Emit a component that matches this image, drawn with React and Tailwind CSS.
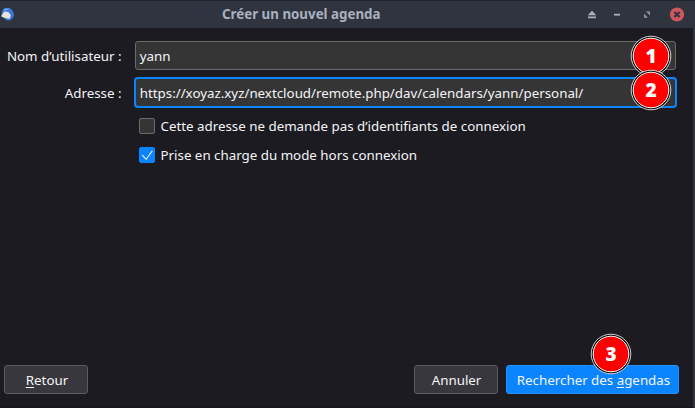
function Badge({ n, className }) {
  return (
    <span className={`absolute z-10 block size-[42px] ${className}`}>
      <svg viewBox="0 0 42 42" className="absolute inset-0 size-full">
        <circle cx="21" cy="21" r="19.8" fill="#0a0a0a" stroke="#d0d0d0" strokeWidth="1" />
        <circle cx="21" cy="21" r="17.8" fill="#ff0000" stroke="#fff" strokeWidth="1" />
      </svg>
      <span className="relative flex h-[41px] items-center justify-center font-['Noto_Sans'] text-[19px] font-black text-white">{n}</span>
    </span>
  );
}

function TitleBar() {
  return (
    <header className="flex h-7 shrink-0 items-center border-t border-[#1f232b] bg-[#2f343f] text-[#a9b1bf]">
      <svg className="size-[15px] shrink-0" viewBox="0 0 15 15">
        <path d="M2.2 3.5 4.3 1.2Q8-.2 11.2 2Q14.4 4.7 13.9 8.2Q13.2 11.8 10.4 13.2Q7.5 14.2 5.5 12.6L1.5 8Z" fill="#3b76dc" />
        <path d="M3 3Q6 .8 9.5 2.1L5.5 3.6Z" fill="#74a5f4" />
        <path d="M1 9.2 4.3 4.6 8.4 5 10.8 8 10 11.6Q5 12 1 9.2Z" fill="#e6e4e2" />
      </svg>
      <h1 className="ml-[207px] flex-1 whitespace-nowrap pb-0.5 text-[13.33px] leading-5 font-bold">Créer un nouvel agenda</h1>
      <svg className="h-7 w-[111px] shrink-0" viewBox="584 0 111 28">
        <path d="m592 9.7 4.3 4.6h-8.6ZM588 15.4h8v1.8h-8Z" fill="#a9b1bf" />
        <path d="M614 12.8h6v1.8h-6Z" fill="#a9b1bf" />
        <path d="M646 10.5h4v4ZM644 12.7v4h4Z" fill="#8f97a5" />
        <circle cx="677" cy="13.5" r="7.1" fill="#cc575d" />
        <path d="m674.4 10.9 5.2 5.2m0-5.2-5.2 5.2" stroke="#2f343f" strokeWidth="2.1" />
      </svg>
    </header>
  );
}

function Check({ checked, children }) {
  return (
    <label className="flex h-[29px] items-center gap-[5.5px]">
      <span className={`size-4 shrink-0 rounded-[2px] border ${checked ? "border-[#0a84ff] bg-[#0a84ff]" : "border-[#6b6b6d] bg-[#353536]"}`}>
        {checked && (
          <svg viewBox="0 0 14 14" className="size-[14px]">
            <path d="m2.3 7.2 3.9 4.1 6.2-8.5" fill="none" stroke="#fff" strokeWidth="1.05" />
          </svg>
        )}
      </span>
      <span className="whitespace-nowrap">{children}</span>
    </label>
  );
}

export default function App() {
  return (
    <div className="relative flex h-[408px] w-[695px] flex-col overflow-hidden bg-[#1c1b22] font-['Noto_Sans',sans-serif] text-[13.33px] leading-5 text-[#f4f4f6]">
      <TitleBar />
      <main className="flex flex-1 flex-col border-r-2 border-b border-r-[#2f343f] border-b-[#18171c]">
        <div className="mt-[13px] flex h-[29px] items-center">
          <span className="w-[135px] whitespace-nowrap pr-[13.5px] text-right">Nom d’utilisateur :</span>
          <div className="flex h-[29px] w-[541px] items-center rounded-[3px] border border-[#6b6b6d] bg-[#353536] pl-[3.7px]">yann</div>
        </div>
        <div className="mt-[7px] flex h-[31px] items-center">
          <span className="w-[134px] pr-[12.5px] text-right">Adresse :</span>
          <div className="flex h-[31px] w-[543px] items-center rounded-[4px] border-2 border-[#0a84ff] bg-[#353536] pl-[3.7px]">
            https://xoyaz.xyz/nextcloud/remote.php/dav/calendars/yann/personal/
          </div>
        </div>
        <div className="mt-[3px] ml-[139px]">
          <Check>Cette adresse ne demande pas d’identifiants de connexion</Check>
          <Check checked>Prise en charge du mode hors connexion</Check>
        </div>
        <footer className="mt-auto mb-[13px] flex h-[29px] gap-2 pr-[14px] pl-1">
          <button className="mr-auto w-[84px] rounded-[3px] border border-[#5c5b62] bg-[#38373d] pl-[2px]">
            <span className="underline underline-offset-2">R</span>etour
          </button>
          <button className="w-[84px] rounded-[3px] border border-[#5c5b62] bg-[#38373d] pl-px">Annuler</button>
          <button className="w-[173px] whitespace-nowrap rounded-[3px] border border-[#2491ff] bg-[#0a84ff] pl-[2px]">
            Rechercher des <span className="underline underline-offset-2">a</span>gendas
          </button>
        </footer>
      </main>
      <Badge n="1" className="top-[35px] left-[630px]" />
      <Badge n="2" className="top-[69px] left-[630px]" />
      <Badge n="3" className="top-[333px] left-[590px]" />
    </div>
  );
}
